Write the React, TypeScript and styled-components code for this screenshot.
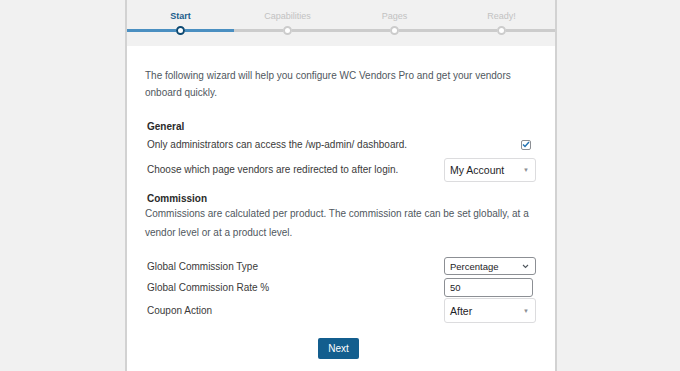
import React from "react";
import styled, { createGlobalStyle } from "styled-components";

const GlobalStyle = createGlobalStyle`
  html, body {
    margin: 0;
    padding: 0;
    background: #f1f1f1;
    font-family: "Liberation Sans", Arial, sans-serif;
  }
`;

const Page = styled.div`
  display: flex;
  justify-content: center;
  min-height: 100vh;
  padding-left: 2px;
`;

const Wizard = styled.div`
  width: 428px;
  border-left: 2px solid #d2d2d2;
  border-right: 2px solid #d2d2d2;
  display: flex;
  flex-direction: column;
`;

const Steps = styled.ol`
  list-style: none;
  margin: 0;
  padding: 10px 0 0;
  height: 46px;
  box-sizing: border-box;
  display: grid;
  grid-template-columns: repeat(4, 1fr);
  background: #f1f1f1;
`;

const Step = styled.li`
  display: flex;
  flex-direction: column;
  align-items: center;
`;

const StepLabel = styled.span<{ $active?: boolean }>`
  font-size: 9px;
  line-height: 12px;
  height: 12px;
  color: ${(p) => (p.$active ? "#1b5d8c" : "#c2c2c2")};
  font-weight: ${(p) => (p.$active ? 600 : 400)};
`;

const Track = styled.div`
  margin-top: 4px;
  width: 100%;
  display: flex;
  align-items: center;
`;

const Line = styled.div<{ $done?: boolean }>`
  flex: 1;
  height: 3px;
  background: ${(p) => (p.$done ? "#4a8fc1" : "#cccccc")};
`;

const Dot = styled.div<{ $active?: boolean }>`
  width: 5px;
  height: 5px;
  border-radius: 50%;
  background: #fff;
  border: 2px solid ${(p) => (p.$active ? "#0d4a73" : "#cccccc")};
`;

const Content = styled.div`
  flex: 1;
  background: #fff;
  padding: 21px 19px 20px 18px;
  color: #50575e;
  font-size: 10px;
`;

const Intro = styled.p`
  margin: 0;
  line-height: 17px;
`;

const Section = styled.div<{ $gap: number }>`
  margin-top: ${(p) => p.$gap}px;
  padding-left: 2px;
`;

const Heading = styled.h3`
  margin: 0;
  font-size: 10px;
  line-height: 17px;
  font-weight: 700;
  color: #2a2a2a;
`;

const Desc = styled.p`
  margin: -2px 0 0 -2px;
  line-height: 18.5px;
  color: #50575e;
`;

const Row = styled.div<{ $h: number; $gap?: number }>`
  display: flex;
  align-items: center;
  justify-content: space-between;
  height: ${(p) => p.$h}px;
  margin-top: ${(p) => p.$gap ?? 0}px;
  color: #3a3a3a;
`;

const Control = styled.div<{ $w: number; $h: number; $strong?: boolean; $small?: boolean }>`
  box-sizing: border-box;
  width: ${(p) => p.$w}px;
  height: ${(p) => p.$h}px;
  display: flex;
  align-items: center;
  justify-content: space-between;
  padding: 0 6px 0 5px;
  background: #fff;
  border: 1px solid ${(p) => (p.$strong ? "#8c8f94" : "#dcdcde")};
  border-radius: 3px;
  font-size: ${(p) => (p.$small ? 9.5 : 10.5)}px;
  color: #1d2327;
`;

const Caret = styled.span`
  font-size: 6px;
  color: #8c8f94;
`;

const Check = styled.span`
  box-sizing: border-box;
  width: 10px;
  height: 10px;
  border: 1px solid #8c8f94;
  border-radius: 2px;
  margin-right: 5px;
  display: flex;
  align-items: center;
  justify-content: center;
`;

const Actions = styled.div`
  display: flex;
  justify-content: center;
  margin-top: 15px;
  padding-right: 4px;
`;

const NextButton = styled.button`
  width: 41px;
  height: 21px;
  border: none;
  border-radius: 2px;
  background: #135e8e;
  color: #fff;
  font-family: inherit;
  font-size: 10px;
  padding: 0;
`;

const steps = ["Start", "Capabilities", "Pages", "Ready!"];

const Chevron = () => (
  <svg width="7" height="5" viewBox="0 0 7 5">
    <path d="M1 1l2.5 2.5L6 1" fill="none" stroke="#50575e" strokeWidth="1.1" />
  </svg>
);

export default function App() {
  return (
    <Page>
      <GlobalStyle />
      <Wizard>
        <Steps>
          {steps.map((s, i) => (
            <Step key={s}>
              <StepLabel $active={i === 0}>{s}</StepLabel>
              <Track>
                <Line $done={i === 0} />
                <Dot $active={i === 0} />
                <Line $done={i === 0} />
              </Track>
            </Step>
          ))}
        </Steps>
        <Content>
          <Intro>
            The following wizard will help you configure WC Vendors Pro and get your vendors
            onboard quickly.
          </Intro>
          <Section $gap={17}>
            <Heading>General</Heading>
            <Row $h={19}>
              <span>Only administrators can access the /wp-admin/ dashboard.</span>
              <Check>
                <svg width="8" height="7" viewBox="0 0 8 7">
                  <path d="M1 3.5l2 2L7 1" fill="none" stroke="#2271b1" strokeWidth="1.4" />
                </svg>
              </Check>
            </Row>
            <Row $h={25} $gap={3}>
              <span>Choose which page vendors are redirected to after login.</span>
              <Control $w={92} $h={24}>
                My Account
                <Caret>▼</Caret>
              </Control>
            </Row>
          </Section>
          <Section $gap={8}>
            <Heading>Commission</Heading>
            <Desc>
              Commissions are calculated per product. The commission rate can be set globally, at a
              vendor level or at a product level.
            </Desc>
            <Row $h={20} $gap={14}>
              <span>Global Commission Type</span>
              <Control $w={92} $h={18} $strong $small>
                Percentage
                <Chevron />
              </Control>
            </Row>
            <Row $h={20} $gap={1}>
              <span>Global Commission Rate %</span>
              <Control $w={89} $h={19} $strong $small style={{ marginRight: 3 }}>
                50
              </Control>
            </Row>
            <Row $h={25} $gap={1}>
              <span>Coupon Action</span>
              <Control $w={92} $h={25}>
                After
                <Caret>▼</Caret>
              </Control>
            </Row>
          </Section>
          <Actions>
            <NextButton>Next</NextButton>
          </Actions>
        </Content>
      </Wizard>
    </Page>
  );
}
